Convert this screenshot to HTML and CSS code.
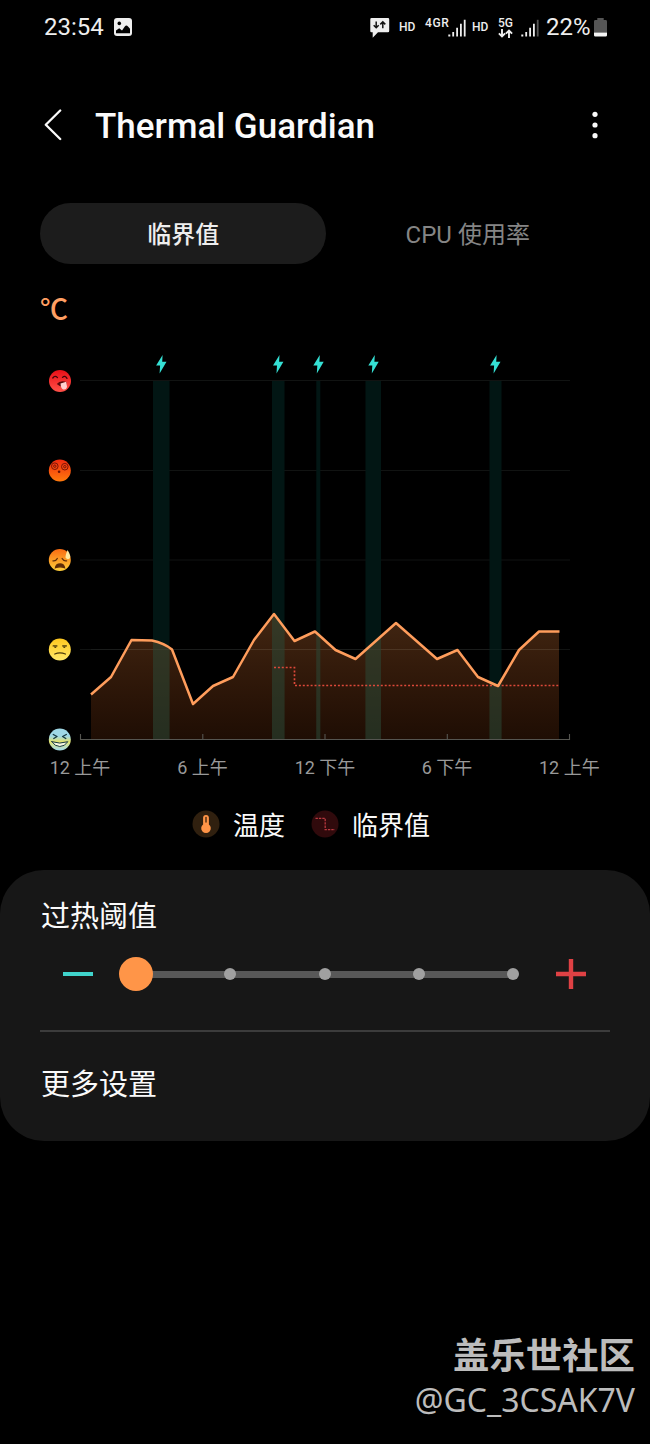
FILE: index.html
```html
<!DOCTYPE html>
<html lang="zh-CN">
<head>
    <meta charset="UTF-8">
    <meta name="viewport" content="width=device-width, initial-scale=1.0">
    <title>Thermal Guardian</title>
    <link rel="stylesheet" href="styles.css">
</head>
<body>

    <!-- Status bar -->
    <div class="status-bar">
        <div class="status-left">
            <span class="clock">23:54</span>
            <svg class="icon-photo" width="18" height="18" viewBox="0 0 18 18">
                <rect width="18" height="18" rx="3" fill="#eee"/>
                <circle cx="5.3" cy="5.4" r="1.8" fill="#000"/>
                <path d="M2 15.2V12.6L5.2 10.3L8 12.4L10.8 8.6Q12.4 6.6 14 8.6L16 10.8V15.2Z" fill="#000"/>
            </svg>
        </div>
        <div class="status-right">
            <svg class="icon-message" width="20" height="21" viewBox="0 0 20 21">
                <path d="M1.5 0H18a1.2 1.2 0 0 1 1.2 1.2V13a1.2 1.2 0 0 1-1.2 1.2H8L2.7 19.8V14.3H1.5A1.2 1.2 0 0 1 .3 13V1.2A1.2 1.2 0 0 1 1.5 0Z" fill="#eee"/>
                <path d="M6.2 3.4V9.6M3.7 7.3L6.2 9.8L8.7 7.3M12.8 10.3V4M10.3 6.4L12.8 3.9L15.3 6.4" fill="none" stroke="#111" stroke-width="1.5"/>
            </svg>
            <span class="hd">HD</span>
            <span class="net-4g">4GR</span>
            <svg class="signal signal-a" width="18" height="18" viewBox="0 0 18 18" fill="#eee">
                <path d="M.3 15.5h2v2h-2zM4.3 13h1.8v4.5H4.3zM8.2 8.7H10v8.8H8.2zM12 4.8h1.8v12.7H12zM15.8 .8h1.8v16.7h-1.8z"/>
            </svg>
            <span class="hd">HD</span>
            <div class="net-5g">
                <span>5G</span>
                <svg width="15" height="9" viewBox="0 0 15 9">
                    <path d="M4 0V7M.9 4.3L4 7.4L7.1 4.3M11 9V2M7.9 4.7L11 1.6L14.1 4.7" fill="none" stroke="#eee" stroke-width="1.9"/>
                </svg>
            </div>
            <svg class="signal signal-b" width="18" height="18" viewBox="0 0 18 18" fill="#eee">
                <path d="M.3 15.5h2v2h-2zM4.3 13h1.8v4.5H4.3zM8.2 8.7H10v8.8H8.2zM12 4.8h1.8v12.7H12z"/>
                <path d="M15.8 .8h1.8v16.7h-1.8z" fill="#555"/>
            </svg>
            <span class="percent">22%</span>
            <svg class="battery" width="13" height="19" viewBox="0 0 13 19">
                <path d="M3.3 0H9.7V2H11.6A1.4 1.4 0 0 1 13 3.4V14.5H0V3.4A1.4 1.4 0 0 1 1.4 2H3.3Z" fill="#555"/>
                <path d="M0 14.5H13V17.2A1.4 1.4 0 0 1 11.6 18.6H1.4A1.4 1.4 0 0 1 0 17.2Z" fill="#f4f4f4"/>
            </svg>
        </div>
    </div>

    <!-- Title -->
    <div class="header">
        <svg class="icon-back" width="18" height="32" viewBox="0 0 18 32">
            <path d="M16.2 1.5L1.8 15.7L16.2 30" fill="none" stroke="#fafafa" stroke-width="2.3" stroke-linecap="round" stroke-linejoin="round"/>
        </svg>
        <h1>Thermal Guardian</h1>
        <svg class="icon-more" width="6" height="28" viewBox="0 0 6 28" fill="#fafafa">
            <circle cx="3" cy="3.3" r="2.6"/>
            <circle cx="3" cy="14" r="2.6"/>
            <circle cx="3" cy="24.7" r="2.6"/>
        </svg>
    </div>

    <!-- Tabs -->
    <div class="tabs">
        <div class="tab active">临界值</div>
        <div class="tab">CPU 使用率</div>
    </div>

    <div class="unit">℃</div>

    <!-- Temperature chart -->
    <svg class="chart" width="650" height="450" viewBox="0 340 650 450">
        <defs>
            <linearGradient id="area" x1="0" y1="614" x2="0" y2="740" gradientUnits="userSpaceOnUse">
                <stop offset="0" stop-color="#ff9447" stop-opacity=".26"/>
                <stop offset="1" stop-color="#ff7020" stop-opacity=".12"/>
            </linearGradient>
            <linearGradient id="red" x1="0" y1="0" x2="0" y2="1">
                <stop offset="0" stop-color="#e80f17"/>
                <stop offset="1" stop-color="#ff5048"/>
            </linearGradient>
            <linearGradient id="redorange" x1="0" y1="0" x2="0" y2="1">
                <stop offset="0" stop-color="#f02b10"/>
                <stop offset="1" stop-color="#ff7a0c"/>
            </linearGradient>
            <linearGradient id="orange" x1="0" y1="0" x2="0" y2="1">
                <stop offset="0" stop-color="#fa6c12"/>
                <stop offset="1" stop-color="#ffcf3a"/>
            </linearGradient>
            <linearGradient id="yellow" x1="0" y1="0" x2="0" y2="1">
                <stop offset="0" stop-color="#ffc81f"/>
                <stop offset="1" stop-color="#ffe768"/>
            </linearGradient>
            <linearGradient id="cool" x1="0" y1="0" x2="0" y2="1">
                <stop offset=".35" stop-color="#9fd8e6"/>
                <stop offset=".6" stop-color="#e5e36c"/>
                <stop offset=".95" stop-color="#a9dce2"/>
            </linearGradient>
            <path id="bolt" d="M1.3-9.2L-5.2 1.4H-1.2L-1.7 9.2L5.2-2.4H.9Z" fill="#35e0d4"/>
        </defs>

        <!-- grid -->
        <path d="M80 380.5H570M80 470.5H570M80 560H570M80 649.5H570" stroke="#111312" stroke-width="1.2"/>

        <!-- charging periods -->
        <g fill="#021614">
            <rect x="153" y="381" width="16.5" height="358"/>
            <rect x="272" y="381" width="12.5" height="358"/>
            <rect x="316.3" y="381" width="4" height="358"/>
            <rect x="365.5" y="381" width="15.5" height="358"/>
            <rect x="489.5" y="381" width="12" height="358"/>
        </g>
        <use href="#bolt" x="161.3" y="364.2"/>
        <use href="#bolt" x="278.2" y="364.2"/>
        <use href="#bolt" x="318.5" y="364.2"/>
        <use href="#bolt" x="373.5" y="364.2"/>
        <use href="#bolt" x="495.3" y="364.2"/>

        <!-- temperature -->
        <path d="M91 694.5L111 677L131.5 640L152 640.5L172 649.5L193 704L213 686L233 677L254 640L274 614L294.5 641L315 631.5L335.5 650L355.5 659L396 623L437 659L457.5 650L478 677L498 686L519 650L539 631.5H559V740H91Z" fill="url(#area)"/>
        <g fill="#2a3a2a" fill-opacity=".55">
            <path d="M153 641L169.5 648.5V739H153Z"/>
            <path d="M272 617L274 614L284.5 628V739H272Z"/>
            <path d="M316.3 632.5L320.3 636V739H316.3Z"/>
            <path d="M365.5 650L381 636.5V739H365.5Z"/>
            <path d="M489.5 682L498 686L501.5 680V739H489.5Z"/>
        </g>
        <path d="M91 649.5H559" stroke="#fff" stroke-opacity=".04"/>
        <path d="M274 667.5H294.5V685.5H559.5" fill="none" stroke="#dd493a" stroke-width="1.7" stroke-dasharray="2 1.9"/>
        <path d="M91 694.5L111 677L131.5 640L152 640.5Q164 643 172 649.5L193 704L213 686L233 677L254 640L274 614L294.5 641L315 631.5L335.5 650L355.5 659L396 623L437 659L457.5 650L478 677L498 686L519 650L539 631.5H559.5" fill="none" stroke="#ff9d5c" stroke-width="2.5" stroke-linejoin="round"/>

        <!-- axis -->
        <path d="M80.5 734V739.5H569.5V734M202.8 734V739M325 734V739M447.3 734V739" fill="none" stroke="#555550" stroke-width="1.1"/>
        <g class="axis-label">
            <text x="80" y="773.5">12 上午</text>
            <text x="202.5" y="773.5">6 上午</text>
            <text x="325" y="773.5">12 下午</text>
            <text x="447" y="773.5">6 下午</text>
            <text x="569.3" y="773.5">12 上午</text>
        </g>

        <!-- faces -->
        <g transform="translate(60 381)" fill="none" stroke="#430408" stroke-width="1.3" stroke-linecap="round">
            <circle r="11" fill="url(#red)" stroke="none"/>
            <path d="M-7.2-3Q-5-6-2.5-3.4M2.5-3.6Q5-6 7-2.6"/>
            <path d="M-3.2 3Q0-1.2 6.5 1L6 5Q1 7-3.2 3Z" fill="#56070a" stroke="none"/>
            <path d="M.5 2.5L6.2 .8L7 6Q6.2 9 3.2 8.4Q.8 7.8 .5 2.5Z" fill="#ffd0d0" stroke="none"/>
        </g>
        <g transform="translate(59.8 470.5)" fill="none" stroke="#7c1408" stroke-width="1">
            <circle r="11" fill="url(#redorange)" stroke="none"/>
            <circle cx="-5" cy="-4.3" r="3.3"/>
            <circle cx="-5" cy="-4.3" r="1.2"/>
            <circle cx="5" cy="-3.8" r="3.3"/>
            <circle cx="5" cy="-3.8" r="1.2"/>
            <circle cx="-.7" cy="1.2" r="1.3" fill="#651006" stroke="none"/>
        </g>
        <g transform="translate(59.8 560)" fill="none" stroke="#5e2c08" stroke-width="1.3" stroke-linecap="round">
            <circle r="11" fill="url(#orange)" stroke="none"/>
            <path d="M-6.8 .8Q-4 1.4-2.5-1.5M2.3-1.5Q4 1.4 6.8 .8"/>
            <path d="M-4.3 7.7Q-3.7 4 .3 4Q4 4 4.7 7.7Q.3 6-4.3 7.7Z" fill="#5e2c08"/>
            <path d="M7.8-10Q12-3.2 9.5-1.2Q7.3-.2 5.8-2.2Q5.4-5 7.8-10Z" fill="#ffe9a0" stroke="none"/>
        </g>
        <g transform="translate(59.8 649.5)" fill="none" stroke="#4c3a0b" stroke-width="1.3" stroke-linecap="round">
            <circle r="11" fill="url(#yellow)" stroke="none"/>
            <path d="M-6.6-3.6H-2.9M2.9-3.6H6.6"/>
            <path d="M-6-3Q-4.5 .2-3-3ZM3-3Q4.5 .2 6-3Z" fill="#4c3a0b" stroke="none"/>
            <path d="M-5 4.5Q0 2.4 5.6 4.5"/>
        </g>
        <g transform="translate(59.8 739.5)" fill="none" stroke="#173a42" stroke-width="1.4" stroke-linecap="round" stroke-linejoin="round">
            <circle r="11" fill="url(#cool)" stroke="none"/>
            <path d="M-6.5-5L-2.8-3L-6-1M6.5-5L2.8-3L6-1"/>
            <path d="M-8 2.2Q0 5 8 2.2Q5 7 0 7Q-5 7-8 2.2Z" fill="#f7f7df" stroke-width="1"/>
        </g>
    </svg>

    <!-- Legend -->
    <div class="legend">
        <svg width="28" height="28" viewBox="0 0 28 28">
            <circle cx="14" cy="14" r="13.5" fill="#30200f"/>
            <path d="M11.1 7.8a2.9 2.9 0 0 1 5.8 0v6.6a4.8 4.8 0 1 1-5.8 0Z" fill="#ff9447"/>
            <path d="M14 7.4V12" stroke="#553012" stroke-width="1.5" stroke-linecap="round"/>
        </svg>
        <span class="legend-temp">温度</span>
        <svg width="28" height="28" viewBox="0 0 28 28">
            <circle cx="14" cy="14" r="13.5" fill="#300a0c"/>
            <path d="M4.5 8.3H14.2V19.7H24" fill="none" stroke="#b8383f" stroke-width="1.3" stroke-dasharray="2.4 1"/>
        </svg>
        <span>临界值</span>
    </div>

    <!-- Settings card -->
    <div class="card">
        <h2>过热阈值</h2>
        <div class="threshold">
            <div class="minus"></div>
            <div class="slider">
                <div class="knob"></div>
                <div class="dot"></div>
                <div class="dot"></div>
                <div class="dot"></div>
                <div class="dot"></div>
            </div>
            <svg class="plus" width="30" height="30" viewBox="0 0 30 30">
                <path d="M15 0V30M0 15H30" stroke="#df4144" stroke-width="4.4"/>
            </svg>
        </div>
        <h2 class="more">更多设置</h2>
    </div>

    <div class="community">
        <div class="community-name">盖乐世社区</div>
        <div class="community-user">@GC_3CSAK7V</div>
    </div>

</body>
</html>
```
FILE: styles.css
```css
* {
    box-sizing: border-box;
}

body {
    margin: 0;
    width: 650px;
    height: 1444px;
    overflow: hidden;
    background-color: #000;
    color: #fafafa;
    font-family: Roboto, "Noto Sans CJK SC", sans-serif;
}

svg {
    display: block;
    flex: none;
}

h1, h2 {
    margin: 0;
    font-weight: 400;
}

.status-bar {
    display: flex;
    justify-content: space-between;
    height: 54px;
    padding: 0 43px 0 44px;
    color: #eee;
}

.status-left,
.status-right {
    display: flex;
    align-items: center;
    height: 54px;
}

.status-right {
    width: 237px;
}

.clock {
    width: 70px;
    font-size: 24px;
}

.icon-message {
    margin: 2px 9px 0 0;
}

.hd {
    width: 17px;
    font-size: 12px;
    font-weight: 500;
}

.net-4g {
    width: 23px;
    margin: -9px 0 0 9px;
    font-size: 12px;
    font-weight: 500;
    letter-spacing: 0.6px;
}

.signal {
    margin-top: 2px;
}

.signal-a {
    margin-right: 6px;
}

.net-5g {
    width: 16px;
    margin: 1px 0 0 9px;
    font-size: 12px;
    font-weight: 500;
    line-height: 10px;
}

.net-5g svg {
    margin-top: 1px;
}

.signal-b {
    margin-left: 7px;
}

.percent {
    width: 48px;
    margin-left: 7px;
    font-size: 24px;
}

.header {
    display: flex;
    align-items: center;
    height: 143px;
    padding: 0 52px 2px 44px;
}

.header h1 {
    flex: 1;
    margin-left: 33px;
    padding-top: 4px;
    font-size: 35px;
    font-weight: 500;
}

.tabs {
    display: flex;
    height: 61px;
    margin: 6px 40px 0;
}

.tab {
    display: flex;
    flex: 1;
    align-items: center;
    justify-content: center;
    padding-bottom: 3px;
    color: #858585;
    font-size: 24px;
    font-weight: 400;
}

.tab.active {
    padding-left: 1px;
    border-radius: 31px;
    background-color: #1c1c1c;
    color: #eee;
    font-weight: 500;
}

.unit {
    height: 76px;
    padding: 26px 0 0 40px;
    color: #ff9f63;
    font-size: 28px;
    font-weight: 500;
    line-height: 42px;
}

.axis-label {
    fill: #999;
    font-size: 18px;
    text-anchor: middle;
}

.legend {
    display: flex;
    align-items: center;
    height: 70px;
    padding: 0 0 2px 192px;
    font-size: 26px;
}

.legend span {
    margin: -2px 0 0 13px;
}

.legend .legend-temp {
    margin-right: 26px;
}

.card {
    height: 271px;
    margin-top: 10px;
    padding: 26px 40px 0;
    border-radius: 44px;
    background-color: #171717;
}

.card h2 {
    padding-left: 1px;
    font-size: 29px;
    line-height: 43px;
}

.threshold {
    display: flex;
    align-items: center;
    height: 93px;
    padding: 0 23px 21px;
    border-bottom: 2px solid #3c3c3c;
}

.minus {
    width: 30px;
    height: 4px;
    background-color: #40d4cc;
}

.slider {
    display: flex;
    align-items: center;
    justify-content: space-between;
    width: 400px;
    height: 34px;
    margin: 0 37px 0 26px;
    background: linear-gradient(#585858, #585858) center / 380px 7px no-repeat;
}

.knob {
    width: 34px;
    height: 34px;
    margin-right: -11px;
    border-radius: 50%;
    background-color: #ff9548;
}

.dot {
    width: 12px;
    height: 12px;
    border-radius: 50%;
    background-color: #a0a0a0;
}

.card .more {
    margin-top: 32px;
}

.community {
    display: flex;
    flex-direction: column;
    align-items: flex-end;
    margin-top: 186px;
    padding-right: 15px;
    color: #bcbcbc;
}

.community-name {
    font-family: "Noto Sans CJK SC", sans-serif;
    font-size: 36.4px;
    font-weight: 700;
    line-height: 52px;
}

.community-user {
    font-family: "Noto Sans", sans-serif;
    font-size: 32px;
    font-weight: 400;
    line-height: 42px;
}
```
